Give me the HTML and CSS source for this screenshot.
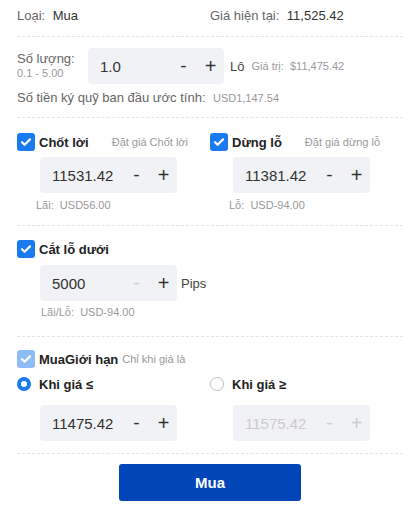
FILE: index.html
```html
<!DOCTYPE html>
<html lang="vi">
<head>
    <meta charset="UTF-8">
    <meta name="viewport" content="width=device-width, initial-scale=1.0">
    <title>Mua</title>
    <link rel="stylesheet" href="styles.css">
</head>
<body>

    <div class="order">
        <!-- Type / price -->
        <div class="section top">
            <div class="col">
                <span class="label">Loại:</span>
                <span class="value">Mua</span>
            </div>
            <div class="col">
                <span class="label">Giá hiện tại:</span>
                <span class="value">11,525.42</span>
            </div>
        </div>

        <!-- Quantity -->
        <div class="section qty">
            <div class="qty-row">
                <div class="qty-label">
                    <div class="label">Số lượng:</div>
                    <div class="hint">0.1 - 5.00</div>
                </div>
                <div class="stepper wide">
                    <span class="num">1.0</span>
                    <span class="btn minus">-</span>
                    <span class="btn">+</span>
                </div>
                <span class="unit">Lô</span>
                <span class="hint">Giá trị:&nbsp; $11,475.42</span>
            </div>
            <div class="margin-row">
                <span class="label">Số tiền ký quỹ ban đầu ước tính:</span>
                <span class="hint">USD1,147.54</span>
            </div>
        </div>

        <!-- Take profit / stop loss -->
        <div class="section tpsl">
            <div class="col">
                <div class="check-row">
                    <span class="check"><svg viewBox="0 0 18 18"><path d="M5 9.2l2.6 2.6L13 6.4"/></svg></span>
                    <span class="title">Chốt lời</span>
                    <span class="note">Đặt giá Chốt lời</span>
                </div>
                <div class="stepper">
                    <span class="num">11531.42</span>
                    <span class="btn minus">-</span>
                    <span class="btn">+</span>
                </div>
                <div class="result">Lãi:&nbsp; USD56.00</div>
            </div>
            <div class="col">
                <div class="check-row">
                    <span class="check"><svg viewBox="0 0 18 18"><path d="M5 9.2l2.6 2.6L13 6.4"/></svg></span>
                    <span class="title">Dừng lỗ</span>
                    <span class="note">Đặt giá dừng lỗ</span>
                </div>
                <div class="stepper">
                    <span class="num">11381.42</span>
                    <span class="btn minus">-</span>
                    <span class="btn">+</span>
                </div>
                <div class="result">Lỗ:&nbsp; USD-94.00</div>
            </div>
        </div>

        <!-- Trailing stop -->
        <div class="section trail">
            <div class="check-row">
                <span class="check"><svg viewBox="0 0 18 18"><path d="M5 9.2l2.6 2.6L13 6.4"/></svg></span>
                <span class="title">Cắt lỗ dưới</span>
            </div>
            <div class="stepper-row">
                <div class="stepper">
                    <span class="num">5000</span>
                    <span class="btn minus off">-</span>
                    <span class="btn">+</span>
                </div>
                <span class="unit">Pips</span>
            </div>
            <div class="result pl">Lãi/Lỗ:&nbsp; USD-94.00</div>
        </div>

        <!-- Limit -->
        <div class="section limit">
            <div class="check-row">
                <span class="check disabled"><svg viewBox="0 0 18 18"><path d="M5 9.2l2.6 2.6L13 6.4"/></svg></span>
                <span class="title">MuaGiới hạn</span>
                <span class="note small">Chỉ khi giá là</span>
            </div>
            <div class="radio-grid">
                <div class="radio-row">
                    <span class="radio on"></span>
                    <span class="title">Khi giá ≤</span>
                </div>
                <div class="radio-row">
                    <span class="radio"></span>
                    <span class="title">Khi giá ≥</span>
                </div>
                <div class="stepper">
                    <span class="num">11475.42</span>
                    <span class="btn minus">-</span>
                    <span class="btn">+</span>
                </div>
                <div class="stepper">
                    <span class="num off">11575.42</span>
                    <span class="btn minus off">-</span>
                    <span class="btn off">+</span>
                </div>
            </div>
        </div>

        <div class="actions">
            <button class="submit">Mua</button>
        </div>
    </div>

</body>
</html>
```

FILE: styles.css
```css
body {
    margin: 0;
    font-family: "Liberation Sans", Arial, sans-serif;
    background-color: #fff;
    color: #333;
}
.order {
    width: 386px;
    margin-left: 17px;
}
.section {
    border-bottom: 1px dashed #e4e4e4;
}
.label {
    font-size: 13px;
    color: #666;
}
.value {
    font-size: 13px;
    color: #333;
    margin-left: 3px;
}
.hint {
    font-size: 11px;
    color: #999;
}

/* top row */
.top {
    display: grid;
    grid-template-columns: 193px 1fr;
    padding: 6px 0 11px;
    line-height: 18px;
}

/* quantity */
.qty {
    padding: 11px 0 10px;
}
.qty-row {
    display: flex;
    align-items: center;
}
.qty-label {
    width: 71px;
    line-height: 14px;
}
.unit {
    font-size: 13px;
    color: #444;
    margin: 0 7px 0 6px;
}
.margin-row {
    margin-top: 4px;
    line-height: 18px;
}
.margin-row .hint {
    margin-left: 3px;
}

/* number stepper */
.stepper {
    display: flex;
    align-items: center;
    width: 137px;
    height: 36px;
    background-color: #f1f2f5;
    border-radius: 4px;
    box-sizing: border-box;
    padding-left: 12px;
}
.stepper.wide {
    width: 136px;
}
.num {
    flex: 1;
    font-size: 15px;
    color: #333;
}
.btn {
    width: 27px;
    text-align: center;
    font-size: 20px;
    color: #333;
    cursor: pointer;
}
.btn.minus {
    font-size: 19px;
}
.off {
    color: #ccc;
}

/* checkboxes */
.check-row {
    display: flex;
    align-items: center;
    height: 20px;
}
.check {
    width: 18px;
    height: 18px;
    border-radius: 3px;
    background-color: #1a7af0;
    display: flex;
    margin-right: 4px;
}
.check.disabled {
    background-color: #8ebdf5;
}
.check svg {
    width: 18px;
    height: 18px;
    fill: none;
    stroke: #fff;
    stroke-width: 2.2;
    stroke-linecap: round;
    stroke-linejoin: round;
}
.title {
    font-size: 13px;
    font-weight: bold;
    color: #222;
}
.note {
    font-size: 11px;
    color: #999;
    margin-left: 23px;
}
.note.small {
    margin-left: 4px;
}

/* take profit / stop loss */
.tpsl {
    display: grid;
    grid-template-columns: 193px 1fr;
    padding: 14px 0 12px;
}
.tpsl .stepper {
    margin: 5px 0 0 23px;
}
.result {
    font-size: 11px;
    color: #999;
    line-height: 16px;
    margin: 4px 0 0 19px;
}

/* trailing stop */
.trail {
    padding: 13px 0 16px;
}
.stepper-row {
    display: flex;
    align-items: center;
    margin: 6px 0 0 23px;
}
.stepper-row .unit {
    margin-left: 4px;
}
.result.pl {
    margin: 3px 0 0 24px;
}

/* limit */
.limit {
    padding: 12px 0 12px;
}
.radio-grid {
    display: grid;
    grid-template-columns: 193px 1fr;
    row-gap: 11px;
    margin-top: 5px;
}
.radio-grid .stepper {
    margin-left: 23px;
}
.radio-row {
    display: flex;
    align-items: center;
    height: 20px;
}
.radio {
    width: 14px;
    height: 14px;
    border-radius: 50%;
    border: 1px solid #bbb;
    box-sizing: border-box;
    margin-right: 8px;
}
.radio.on {
    border: 4px solid #1a7af0;
}

/* submit */
.actions {
    display: flex;
    justify-content: center;
    padding-top: 10px;
}
.submit {
    width: 182px;
    height: 37px;
    border: none;
    border-radius: 3px;
    background-color: #0046b8;
    color: #fff;
    font-family: "Liberation Sans", Arial, sans-serif;
    font-size: 15px;
    font-weight: bold;
}
```
